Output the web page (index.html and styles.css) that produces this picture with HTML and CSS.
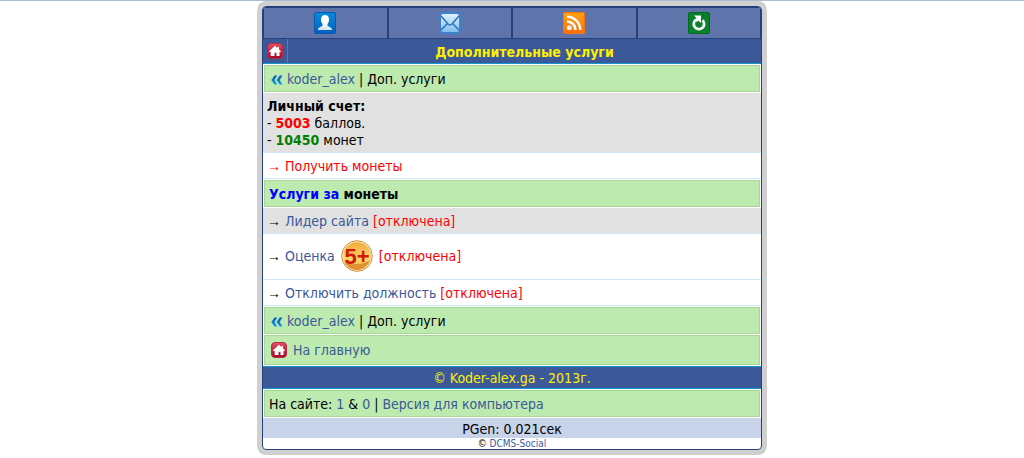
FILE: index.html
```html
<!DOCTYPE html>
<html lang="ru">
<head>
<meta charset="utf-8">
<meta name="viewport" content="width=device-width, initial-scale=1">
<title>Дополнительные услуги</title>
<link rel="stylesheet" href="styles.css">
</head>
<body>
<svg class="defs" aria-hidden="true">
  <defs>
    <linearGradient id="g-user" x2="0" y2="1"><stop offset="0" stop-color="#0a8ae0"/><stop offset="1" stop-color="#0560bd"/></linearGradient>
    <linearGradient id="g-mail" x2="0" y2="1"><stop offset="0" stop-color="#e8f4fc"/><stop offset="1" stop-color="#7cbcec"/></linearGradient>
    <linearGradient id="g-rss" x2="0" y2="1"><stop offset="0" stop-color="#ffa30f"/><stop offset="1" stop-color="#ff6d0a"/></linearGradient>
    <linearGradient id="g-home" x2="0" y2="1"><stop offset="0" stop-color="#e0566c"/><stop offset=".5" stop-color="#d01f3c"/><stop offset="1" stop-color="#a00d28"/></linearGradient>
    <linearGradient id="g-coin" x2="0" y2="1"><stop offset="0" stop-color="#f3a93c"/><stop offset=".6" stop-color="#fbd768"/><stop offset="1" stop-color="#f5bc48"/></linearGradient>
    <linearGradient id="g-white" x2="0" y2="1"><stop offset=".5" stop-color="#fff"/><stop offset="1" stop-color="#d3e2f0"/></linearGradient>
    <linearGradient id="g-back" x2="0" y2="1"><stop offset="0" stop-color="#0a55b8"/><stop offset="1" stop-color="#0a9be6"/></linearGradient>
    <symbol id="home" viewBox="0 0 16 16">
      <rect x=".5" y=".5" width="15" height="15" rx="3.5" fill="url(#g-home)" stroke="#b82a42"/>
      <path d="M8 2.800 2 8.300l.8 1 .9-.6V13h3.800V9.800h2V13h3V8.700l.7.600.8-1-2-1.800V4h-1.500v1.200z" fill="#fff"/>
    </symbol>
    <symbol id="back" viewBox="0 0 12 12">
      <path d="M3.600 1.500h2.600L3.500 6l2.700 4.500H3.600L.3 6zM8.800 1.500h2.600L8.700 6l2.700 4.500H8.800L5.500 6z" fill="url(#g-back)"/>
    </symbol>
  </defs>
</svg>
<div class="page">
  <nav class="tabs">
    <a class="tab" href="#user" aria-label="Профиль">
      <svg class="tab-icon" viewBox="0 0 22 22"><rect x=".5" y=".5" width="21" height="21" rx="1.500" fill="url(#g-user)" stroke="#0559b0"/><path d="M11 3c2.600 0 4 1.700 4 4.300 0 2-.6 3.700-1.500 4.600v1.700c0 1 4.500 1.300 4.500 4.400H4c0-3.100 4.500-3.400 4.500-4.400v-1.700C7.600 11 7 9.300 7 7.300 7 4.700 8.400 3 11 3z" fill="url(#g-white)"/></svg>
    </a>
    <a class="tab" href="#mail" aria-label="Почта">
      <svg class="tab-icon" viewBox="0 0 22 22"><rect x="1" y="1" width="20" height="20" rx="3" fill="url(#g-mail)" stroke="#3b83cd" stroke-width="2"/><path d="M2 4l7 8M20 4l-7 8M8.500 11.500c2 2 3 2 5 0M8.500 11.500L2 18M13.500 11.500L20 18" fill="none" stroke="#3377bd" stroke-width="1.700"/></svg>
    </a>
    <a class="tab" href="#feed" aria-label="Лента">
      <svg class="tab-icon" viewBox="0 0 22 22"><rect x=".5" y=".5" width="21" height="21" rx="1.500" fill="url(#g-rss)" stroke="#f57513"/><circle cx="6.200" cy="15.800" r="2.500" fill="#eee"/><path d="M4 9.500a8.500 8.500 0 0 1 8.500 8.500M4 4.800A13.200 13.200 0 0 1 17.200 18" fill="none" stroke="#fff" stroke-width="2.600"/></svg>
    </a>
    <a class="tab" href="#reload" aria-label="Обновить">
      <svg class="tab-icon" viewBox="0 0 22 22"><rect x=".5" y=".5" width="21" height="21" rx="1.500" fill="#08802c" stroke="#046a22"/><path d="M14.500 8.200a5.200 5.200 0 1 1-6.500-.5" fill="none" stroke="#f4f4f4" stroke-width="2.800"/><path d="M6 3.500h7v7.500L10.500 8.800 8.500 10 7 7.500l1.500-1.300z" fill="#fff"/></svg>
    </a>
  </nav>
  <header class="title">
    <a class="title-home" href="#home" aria-label="На главную"><svg class="home-icon"><use href="#home"/></svg></a>
    <h1 class="title-text">Дополнительные услуги</h1>
  </header>
  <main>
    <div class="bar bar-nav"><svg class="back-icon"><use href="#back"/></svg><span><a href="#koder">koder_alex</a> | Доп. услуги</span></div>
    <div class="row row-gray"><b>Личный счет:</b><br>- <b class="red">5003</b> баллов.<br>- <b class="green">10450</b> монет</div>
    <div class="row"><a class="red" href="#coins"><span class="arrow">→</span> Получить монеты</a></div>
    <h2 class="bar heading"><span class="blue">Услуги за</span> монеты</h2>
    <div class="row row-gray"><span class="arrow">→</span> <a href="#leader">Лидер сайта</a> <span class="red">[отключена]</span></div>
    <div class="row row-rating"><span><span class="arrow">→</span> <a href="#rating">Оценка</a></span>
      <svg class="coin" viewBox="0 0 32 32"><circle cx="16" cy="16" r="15.300" fill="#fdf0c4" stroke="#ce8b3d"/><circle cx="16" cy="16" r="13.800" fill="url(#g-coin)"/><path d="M3 21c8 4 19 4 26-1-2 6-7 10-13 10S5 26 3 21z" fill="#df9330"/><text class="coin-text" x="16" y="24" text-anchor="middle">5+</text></svg>
      <span class="red">[отключена]</span></div>
    <div class="row"><span class="arrow">→</span> <a href="#post">Отключить должность</a> <span class="red">[отключена]</span></div>
    <div class="bar bar-nav"><svg class="back-icon"><use href="#back"/></svg><span><a href="#koder">koder_alex</a> | Доп. услуги</span></div>
    <div class="bar bar-home"><svg class="home-icon"><use href="#home"/></svg><a href="#home">На главную</a></div>
  </main>
  <footer>
    <div class="copyright">© Koder-alex.ga - 2013г.</div>
    <div class="bar">На сайте: <a href="#online">1</a> &amp; <a href="#guests">0</a> | <a href="#desktop">Версия для компьютера</a></div>
    <div class="pgen">PGen: 0.021сек</div>
    <div class="engine">© <a href="#dcms">DCMS-Social</a></div>
  </footer>
</div>
</body>
</html>
```
FILE: styles.css
```css
* { box-sizing: border-box; }
body {
  margin: 0;
  border-top: 1px solid #a9bbd2;
  background: #fff;
  color: #000;
  font: 14px/17px Tahoma, "DejaVu Sans Condensed", "Noto Sans", sans-serif;
}
a { color: #3b5998; text-decoration: none; }
svg { display: block; flex: none; }
.defs { position: absolute; width: 0; height: 0; }
.page {
  max-width: 500px;
  margin: 5px auto;
  border: 1px solid #27407c;
  border-radius: 4px;
  box-shadow: 0 0 0 5px #d0d0d0;
  overflow: hidden;
}
.tabs { display: grid; grid-template-columns: repeat(4, 1fr); }
.tab {
  display: flex;
  justify-content: center;
  padding: 4px;
  border: 1px solid #27407c;
  background: #5f74ab;
}
.tab-icon { width: 22px; height: 22px; }
.title {
  display: flex;
  background: #3b5998;
  border-bottom: 1px solid #1496cf;
}
.title-home { padding: 4px; border-right: 1px solid #1496cf; }
.home-icon { width: 16px; height: 16px; }
.title-text {
  flex: 1;
  margin: 0;
  padding: 5px 0 2px;
  color: #fff000;
  font-size: 14px;
  line-height: 17px;
  text-align: center;
}
.bar {
  margin: 1px;
  padding: 5px 4px 3px;
  border: 1px solid #a9d694;
  background: #bdeaae;
}
.bar + .bar { margin-top: 0; }
.bar-nav { display: flex; align-items: center; gap: 4px; padding: 5px 6px 3px; }
.back-icon { width: 12px; height: 12px; }
.bar-home { display: flex; gap: 6px; padding: 6px 6px 5px; }
.heading { font-size: 14px; line-height: 17px; }
.row { padding: 5px 4px 3px; border-bottom: 1px solid #cdeaf8; }
.row-gray { background: #e1e1e1; }
.row-rating { display: flex; align-items: center; gap: 6px; padding: 6px 4px 7px; }
.arrow { font-family: "Liberation Sans", sans-serif; line-height: 1; }
.coin { width: 32px; height: 32px; }
.coin-text { fill: #d01a0c; font: bold 22px "Liberation Sans", sans-serif; }
.red { color: #f00; }
.green { color: #008000; }
.blue { color: #00f; }
.copyright {
  padding: 3px 2px 1px;
  border: solid #1496cf;
  border-width: 1px 0;
  background: #3b5998;
  color: #fff000;
  text-align: center;
}
.pgen { padding: 3px 2px 0; background: #c8d2e9; text-align: center; }
.engine { font-size: 10px; line-height: 11px; text-align: center; }
```
